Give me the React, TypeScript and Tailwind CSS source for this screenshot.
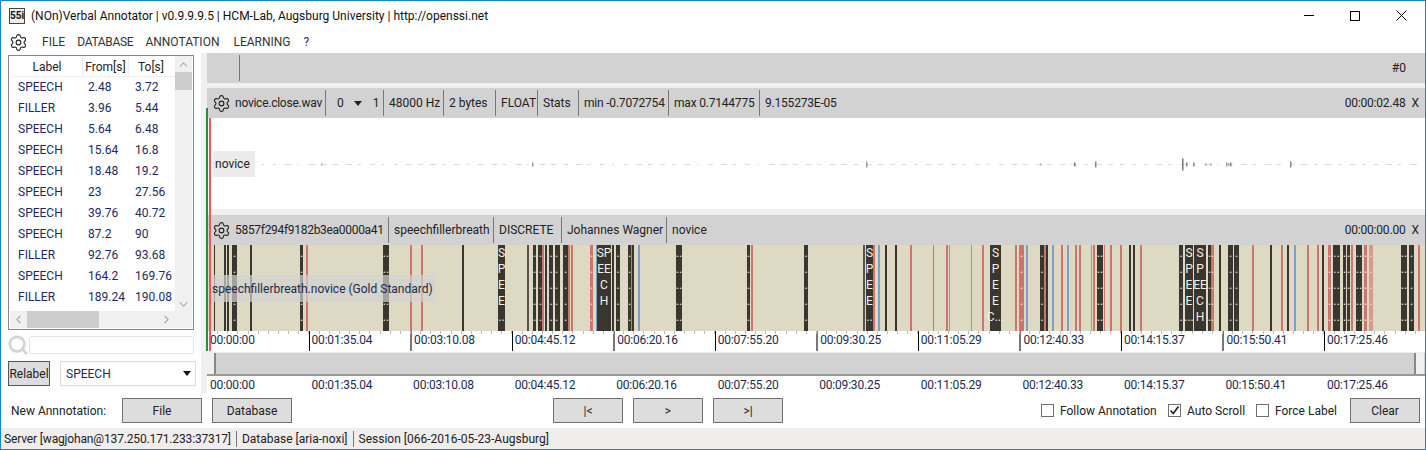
import React from 'react'
import { Settings, ChevronUp, ChevronDown, ChevronLeft, ChevronRight, Search } from 'lucide-react'

type Seg = [number, number, string, string[]?]

const D = '#38362f'
const R = '#c9776c'
const B = '#7f9fc8'
const SPEE = ['S', 'P', 'E', 'E', '..']

// x, width, colour, text rows
const segments: Seg[] = [
  [214, 1, D], [224, 2, D], [227, 2, D], [232, 5, D], [250, 2, D], [300, 3, D], [306, 2, R], [383, 6, D],
  [410, 2, R], [421, 2, R], [462, 2, D], [498, 7, D, SPEE], [527, 2, '#55534a'], [533, 3, D], [538, 5, D],
  [542, 2, R], [545, 2, D], [549, 4, D], [555, 3, D], [558, 2, D], [563, 5, D], [568, 2, R], [571, 2, R],
  [590, 3, R], [596, 1, B], [597, 14, D, ['SP', 'EE', 'C', 'H']], [612, 2, D], [616, 4, D], [628, 3, D],
  [631, 1, R], [632, 2, D], [638, 2, B], [676, 6, D], [747, 3, D], [751, 2, R], [804, 4, D], [863, 2, '#55534a'],
  [866, 7, D, SPEE], [873, 2, R], [878, 2, B], [885, 2, D], [895, 2, D], [910, 2, R], [933, 1, R], [946, 2, R],
  [949, 1, B], [971, 1, B], [982, 2, R], [990, 11, D, ['S', 'P', 'E', 'E', 'C...']], [1015, 2, R], [1019, 5, R],
  [1026, 2, B], [1040, 4, D], [1044, 2, R], [1046, 2, D], [1052, 2, B], [1061, 2, R], [1067, 2, B], [1075, 2, R],
  [1079, 2, R], [1091, 1, B], [1093, 2, R], [1097, 6, D], [1104, 1, R], [1110, 2, R], [1120, 2, R], [1129, 2, D],
  [1133, 2, D], [1140, 2, R], [1179, 4, D], [1185, 8, D, ['S', 'P', 'E', 'E', '...']], [1194, 12, D, ['S', 'P', 'EE', 'C', 'H']],
  [1208, 3, D], [1211, 3, R], [1219, 2, D], [1228, 5, D], [1234, 5, D], [1252, 2, R], [1270, 2, D], [1281, 2, R],
  [1287, 2, D], [1294, 2, B], [1307, 2, R], [1317, 2, R], [1322, 2, D], [1328, 3, R], [1333, 7, D], [1343, 3, D],
  [1347, 3, D], [1351, 2, R], [1356, 6, D], [1364, 3, R], [1369, 4, '#d49a90'], [1401, 6, D], [1409, 5, D], [1418, 2, R],
]

const rows = [
  ['SPEECH', '2.48', '3.72'], ['FILLER', '3.96', '5.44'], ['SPEECH', '5.64', '6.48'], ['SPEECH', '15.64', '16.8'],
  ['SPEECH', '18.48', '19.2'], ['SPEECH', '23', '27.56'], ['SPEECH', '39.76', '40.72'], ['SPEECH', '87.2', '90'],
  ['FILLER', '92.76', '93.68'], ['SPEECH', '164.2', '169.76'], ['FILLER', '189.24', '190.08'],
]

const times = ['00:00:00', '00:01:35.04', '00:03:10.08', '00:04:45.12', '00:06:20.16', '00:07:55.20', '00:09:30.25', '00:11:05.29', '00:12:40.33', '00:14:15.37', '00:15:50.41', '00:17:25.46']

const spikes: [number, number, string][] = [
  [321, 1, '#aaa'], [532, 2, '#999'], [866, 3, '#999'], [1040, 1, '#aaa'], [1074, 2, '#777'], [1095, 3, '#888'], [1182, 6, '#777'], [1193, 2, '#888'],
  [1205, 1, '#999'], [1226, 2, '#999'], [1290, 3, '#888'], [1228, 1, '#999'], [1230, 2, '#888'], [1210, 1, '#999'], [1186, 2, '#888'],
]

const Waveform = () => {
  const dashes: number[] = []
  for (let i = 0; i < 150; i++) dashes.push((i * 7.7 + ((i * 37) % 11)) | 0)
  return (
    <svg width="1164" height="20" className="block" viewBox="262 153 1164 20">
      {dashes.map((d) => (
        <rect key={d} x={262 + d} y="163" width={2 + (d % 5)} height="1" fill="#dddddd" />
      ))}
      {spikes.map(([x, h, c]) => (
        <rect key={x} x={x} y={163.5 - h} width="1.5" height={h * 2} fill={c} />
      ))}
    </svg>
  )
}

const Gear = () => <Settings size={19} strokeWidth={1.4} className="text-[#222] shrink-0" />

const Cell = ({ w, children }: { w: string; children: React.ReactNode }) => (
  <div className={`${w} h-[26px] flex items-center border-r border-[#777] pl-[5px] whitespace-nowrap shrink-0`}>{children}</div>
)

const Btn = ({ w, children }: { w: string; children: React.ReactNode }) => (
  <div className={`${w} h-[25px] flex items-center justify-center bg-[#dddddd] border border-[#707070] text-[#222] shrink-0`}>{children}</div>
)

const Check = ({ on, label, cls }: { on?: boolean; label: string; cls: string }) => (
  <div className={`flex items-center gap-[6px] shrink-0 ${cls}`}>
    <div className="w-[13px] h-[13px] border border-[#707070] bg-white flex items-center justify-center">
      {on && (
        <svg width="11" height="11" viewBox="0 0 11 11">
          <path d="M1.5 5.5 L4.2 8.5 L9.5 1.5" fill="none" stroke="#222" strokeWidth="1.7" />
        </svg>
      )}
    </div>
    <span>{label}</span>
  </div>
)

const Axis = ({ ticks }: { ticks?: boolean }) => (
  <div className="flex h-full relative tracking-[-0.2px]">
    {ticks && (
      <div className="absolute left-0 right-0 top-0 h-[3px] bg-[repeating-linear-gradient(90deg,#bbbbbb_0,#bbbbbb_1px,transparent_1px,transparent_10.15px)]" />
    )}
    {times.map((t, i) => (
      <div
        key={t}
        className={`w-[101.55px] shrink-0 h-[20px] pl-[2px] leading-[18px] whitespace-nowrap text-[#1c2a4e] ${
          !ticks ? 'border-l border-transparent' : i === 0 ? 'border-l border-transparent' : i % 2 === 1 ? 'border-l border-black' : 'border-l-2 border-[#777]'
        }`}
      >
        {t}
      </div>
    ))}
  </div>
)

export default function App() {
  return (
    <div className="w-[1426px] h-[450px] box-border border border-[#1883d7] bg-white overflow-hidden flex flex-col font-['Roboto',sans-serif] text-[12px] text-[#222]">
      {/* title */}
      <div className="h-[29px] flex items-center shrink-0 pl-[8px]">
        <div className="w-[16px] h-[16px] border border-[#444] bg-[#eee] text-[10px] font-bold leading-[14px] text-center text-[#111]">55i</div>
        <span className="ml-[6px] text-[#111]">(NOn)Verbal Annotator | v0.9.9.9.5 | HCM-Lab, Augsburg University | http://openssi.net</span>
        <div className="ml-auto flex items-center">
          <div className="w-[46px] flex justify-center">
            <div className="w-[10px] h-[1px] bg-black" />
          </div>
          <div className="w-[46px] flex justify-center">
            <div className="w-[10px] h-[10px] border border-black" />
          </div>
          <div className="w-[46px] flex justify-center mr-[1px]">
            <svg width="11" height="11" viewBox="0 0 11 11">
              <path d="M0.5 0.5 L10.5 10.5 M10.5 0.5 L0.5 10.5" stroke="#000" strokeWidth="1" />
            </svg>
          </div>
        </div>
      </div>
      {/* menu */}
      <div className="h-[23px] flex items-center shrink-0 pl-[8px] pt-[1px] text-[#333]">
        <Gear />
        <span className="ml-[14px]">FILE</span>
        <span className="ml-[12px] tracking-[-0.3px]">DATABASE</span>
        <span className="ml-[12px]">ANNOTATION</span>
        <span className="ml-[14px]">LEARNING</span>
        <span className="ml-[13px]">?</span>
      </div>
      {/* main */}
      <div className="flex h-[340px] shrink-0 relative">
        <div className="w-[200px] shrink-0 pl-[7px] pt-[2px]">
          <div className="w-[186px] h-[275px] border border-[#828790] flex flex-col">
            <div className="flex flex-1 min-h-0">
              <div className="w-[166px] pt-[1px] pl-[3px] text-[#1c2a5e]">
                <div className="h-[20px] flex border-b border-[#eeeeee] text-[#222] text-center leading-[21px]">
                  <div className="w-[71px] border-r border-[#eeeeee]">Label</div>
                  <div className="w-[46px] border-r border-[#eeeeee]">From[s]</div>
                  <div className="w-[44px]">To[s]</div>
                </div>
                {rows.map((r, i) => (
                  <div key={i} className="h-[21px] flex leading-[21px]">
                    <div className="w-[76px] pl-[6px]">{r[0]}</div>
                    <div className="w-[47px]">{r[1]}</div>
                    <div className="w-[38px]">{r[2]}</div>
                  </div>
                ))}
              </div>
              <div className="w-[17px] bg-[#f0f0f0] flex flex-col items-center relative">
                <ChevronUp size={13} className="text-[#aaa] mt-[2px]" />
                <div className="w-full h-[18px] bg-[#cdcdcd] mt-[1px]" />
                <ChevronDown size={13} className="text-[#aaa] mt-auto" />
              </div>
            </div>
            <div className="h-[17px] bg-[#f0f0f0] flex items-center mb-[1px] shrink-0 ml-[1px] mr-[1px]">
              <ChevronLeft size={13} className="text-[#aaa] ml-[2px]" />
              <div className="w-[72px] h-full bg-[#cdcdcd] ml-[2px]" />
              <ChevronRight size={13} className="text-[#aaa] ml-[61px]" />
            </div>
          </div>
          <div className="flex items-center mt-[4px]">
            <Search size={22} strokeWidth={3} className="text-[#d4d4d4] shrink-0 -ml-[1px]" />
            <div className="w-[165px] h-[18px] border border-[#e4e4e4] rounded-[2px]" />
          </div>
          <div className="flex mt-[5px]">
            <div className="w-[42px] h-[25px] flex items-center justify-center bg-[#dddddd] border border-[#555]">Relabel</div>
            <div className="ml-[10px] w-[136px] h-[25px] border border-[#d9d9d9] flex items-center pl-[5px] text-[#1c2a5e]">
              SPEECH
              <svg width="8" height="5" viewBox="0 0 8 5" className="ml-auto mr-[4px]">
                <path d="M0 0 H8 L4 5 Z" fill="#111" />
              </svg>
            </div>
          </div>
        </div>
        <div className="w-[6px] shrink-0 bg-[#f0f0f0]" />
        <div className="flex-1 min-w-0 flex flex-col">
          {/* top bar */}
          <div className="h-[30px] bg-[#d2d2d2] flex items-center shrink-0">
            <div className="w-[33px] h-[26px] border-r border-[#777]" />
            <span className="ml-auto mr-[19px]">#0</span>
          </div>
          <div className="h-[5px] bg-[#f0f0f0] shrink-0" />
          {/* wav track */}
          <div className="h-[30px] bg-[#d2d2d2] flex items-center shrink-0 pl-[4px]">
            <Cell w="w-[115px]">
              <div className="-ml-[4px] flex items-center gap-[4px]">
                <Gear />
                <span className="tracking-[-0.25px]">novice.close.wav</span>
              </div>
            </Cell>
            <Cell w="w-[58px]">
              <span className="ml-[6px]">0</span>
              <svg width="8" height="5" viewBox="0 0 8 5" className="ml-[10px]">
                <path d="M0 0 H8 L4 5 Z" fill="#222" />
              </svg>
              <span className="ml-[11px]">1</span>
            </Cell>
            <Cell w="w-[60px]">48000 Hz</Cell>
            <Cell w="w-[52px]">2 bytes</Cell>
            <Cell w="w-[42px]">FLOAT</Cell>
            <Cell w="w-[41px]">Stats</Cell>
            <Cell w="w-[90px]">
              <span className="tracking-[-0.2px]">min -0.7072754</span>
            </Cell>
            <Cell w="w-[91px]">
              <span className="tracking-[-0.2px]">max 0.7144775</span>
            </Cell>
            <span className="ml-[5px] whitespace-nowrap tracking-[-0.2px]">9.155273E-05</span>
            <span className="ml-auto whitespace-nowrap tracking-[-0.2px]">00:00:02.48</span>
            <span className="ml-[6px] mr-[6px]">X</span>
          </div>
          <div className="h-[91px] bg-white shrink-0 flex items-center pl-[6px] relative">
            <div className="w-[42px] h-[26px] bg-[#ebebeb] flex items-center pl-[2px] shrink-0">novice</div>
            <div className="ml-[7px]">
              <Waveform />
            </div>
          </div>
          <div className="h-[6px] bg-[#f0f0f0] shrink-0" />
          {/* annotation track */}
          <div className="h-[30px] bg-[#d2d2d2] flex items-center shrink-0 pl-[4px]">
            <Cell w="w-[178px]">
              <div className="-ml-[4px] flex items-center gap-[4px]">
                <Gear />
                <span className="tracking-[-0.3px]">5857f294f9182b3ea0000a41</span>
              </div>
            </Cell>
            <Cell w="w-[105px]">speechfillerbreath</Cell>
            <Cell w="w-[68px]">DISCRETE</Cell>
            <Cell w="w-[105px]">Johannes Wagner</Cell>
            <span className="ml-[5px]">novice</span>
            <span className="ml-auto whitespace-nowrap tracking-[-0.2px]">00:00:00.00</span>
            <span className="ml-[6px] mr-[6px]">X</span>
          </div>
          <div className="h-[86px] bg-[#ded9c3] shrink-0 relative overflow-hidden">
            {segments.map(([x, w, c, text]) => (
              <div
                key={x}
                className="absolute top-0 bottom-0 flex flex-col items-center text-[#f5f0e0] leading-[16px] whitespace-nowrap"
                style={{ left: x - 207, width: w, backgroundColor: c }}
              >
                {(text ?? (w >= 6 ? ['..', '..', '..', '..', '..'] : w >= 3 ? ['.', '.', '.', '.', '.'] : [])).map((t, i) => (
                  <div key={i} className="h-[16px]">{x < 435 && i === 2 ? '' : t}</div>
                ))}
              </div>
            ))}
            <div className="absolute left-[5px] top-[30px] w-[223px] h-[27px] bg-[#d2d2d2]/70 flex items-center text-[#1c2a4e] whitespace-nowrap">
              speechfillerbreath.novice (Gold Standard)
            </div>
          </div>
          <div className="h-[21px] shrink-0 bg-white overflow-hidden">
            <Axis ticks />
          </div>
          {/* timeline slider */}
          <div className="h-[24px] shrink-0 flex bg-[#d2d2d2] border-y border-[#eeeeee] border-b-2 border-b-[#999]">
            <div className="w-[9px] bg-[#f0f0f0] border-r-2 border-[#888]" />
            <div className="w-[10px] ml-auto mr-[1px] bg-[#f0f0f0] border-l-2 border-[#888]" />
          </div>
          <div className="h-[17px] shrink-0 overflow-hidden leading-none">
            <Axis />
          </div>
        </div>
        {/* cursors */}
        <div className="absolute left-[205px] top-[55px] bottom-[42px] w-[2px] bg-[#2e8b3a]" />
        <div className="absolute left-[208px] top-[65px] bottom-[42px] w-[2px] bg-[#e85a5a]" />
      </div>
      {/* controls */}
      <div className="flex-1 flex items-center pl-[10px] pr-[5px]">
        <span className="w-[111px] shrink-0">New Annnotation:</span>
        <Btn w="w-[80px]">File</Btn>
        <Btn w="w-[80px] ml-[10px]">Database</Btn>
        <Btn w="w-[70px] ml-[261px]">|&lt;</Btn>
        <Btn w="w-[70px] ml-[10px]">&gt;</Btn>
        <Btn w="w-[70px] ml-[10px]">&gt;|</Btn>
        <Check label="Follow Annotation" cls="ml-[258px] w-[127px]" />
        <Check on label="Auto Scroll" cls="w-[88px]" />
        <Check label="Force Label" cls="w-[94px]" />
        <Btn w="w-[70px]">Clear</Btn>
      </div>
      {/* status */}
      <div className="h-[21px] shrink-0 bg-[#f0eded] flex items-center pl-[3px]">
        <span className="pr-[5px] border-r border-[#777] leading-[16px] tracking-[-0.15px]">Server [wagjohan@137.250.171.233:37317]</span>
        <span className="px-[5px] border-r border-[#777] leading-[16px]">Database [aria-noxi]</span>
        <span className="px-[5px]">Session [066-2016-05-23-Augsburg]</span>
      </div>
    </div>
  )
}
